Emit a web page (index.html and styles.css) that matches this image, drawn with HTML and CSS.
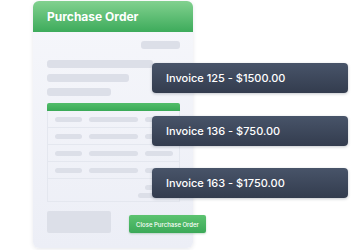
FILE: index.html
```html
<!DOCTYPE html>
<html lang="en">
<head>
    <meta charset="UTF-8">
    <title>Purchase Order</title>
    <link rel="stylesheet" href="styles.css">
</head>
<body>
    <div class="card">
        <header class="card-header">Purchase Order</header>
        <div class="card-body">
            <div class="bar bar-top"></div>
            <div class="lines">
                <div class="bar w106"></div>
                <div class="bar w82"></div>
                <div class="bar w64"></div>
            </div>
            <div class="green-bar"></div>
            <div class="table">
                <div class="row"><span class="cell c1"></span><span class="cell c2"></span><span class="cell c3"></span></div>
                <div class="row"><span class="cell c1"></span><span class="cell c2"></span><span class="cell c3"></span></div>
                <div class="row"><span class="cell c1"></span><span class="cell c2"></span><span class="cell c3"></span></div>
                <div class="row"><span class="cell c1"></span><span class="cell c2"></span><span class="cell c3"></span></div>
                <div class="totals">
                    <span class="cell t1"></span>
                    <span class="cell t2"></span>
                </div>
            </div>
            <div class="actions">
                <div class="placeholder"></div>
                <button class="button">Close Purchase Order</button>
            </div>
        </div>
    </div>

    <div class="invoice inv1">Invoice 125 - $1500.00</div>
    <div class="invoice inv2">Invoice 136 - $750.00</div>
    <div class="invoice inv3">Invoice 163 - $1750.00</div>
</body>
</html>
```

FILE: styles.css
```css
body {
    margin: 0;
    background: #fff;
    font-family: Inter, "Noto Sans", sans-serif;
    position: relative;
    width: 358px;
    height: 250px;
    overflow: hidden;
}
.card {
    width: 160px;
    height: 247px;
    margin: 1px 0 0 33px;
    border-radius: 6px;
    background: linear-gradient(#f6f7fb, #eceef6);
    box-shadow: 0 1px 4px rgba(40, 50, 80, 0.12);
    display: flex;
    flex-direction: column;
}
.card-header {
    height: 31px;
    box-sizing: border-box;
    padding: 0 14px;
    display: flex;
    align-items: center;
    color: #fff;
    font-weight: 700;
    font-size: 12px;
    border-radius: 6px 6px 0 0;
    background: linear-gradient(#82d18f, #3dab5b);
}
.card-body {
    padding: 9px 13px 0 14px;
    display: flex;
    flex-direction: column;
}
.bar {
    height: 8px;
    border-radius: 3px;
    background: #dcdfe8;
}
.bar-top {
    width: 39px;
    align-self: flex-end;
}
.lines {
    margin-top: 11px;
    display: flex;
    flex-direction: column;
    gap: 6px;
}
.w106 { width: 106px; }
.w82 { width: 82px; }
.w64 { width: 64px; }
.green-bar {
    margin-top: 7px;
    height: 8px;
    border-radius: 2px 2px 0 0;
    background: linear-gradient(#52bd6a, #3aa957);
}
.table {
    border: 1px solid #e4e7ef;
    border-top: none;
    height: 91px;
    box-sizing: border-box;
    display: flex;
    flex-direction: column;
}
.row {
    height: 17px;
    box-sizing: border-box;
    border-bottom: 1px solid #e4e7ef;
    display: flex;
    align-items: center;
    padding-left: 7px;
    gap: 7px;
}
.cell {
    height: 5px;
    border-radius: 3px;
    background: #dcdfe8;
    display: block;
}
.c1 { width: 27px; }
.c2 { width: 49px; }
.c3 { width: 28px; }
.totals {
    display: flex;
    flex-direction: column;
    align-items: flex-end;
    padding: 6px 6px 0 0;
    gap: 3px;
}
.t1 { width: 28px; }
.t2 { width: 35px; }
.actions {
    margin-top: 9px;
    display: flex;
    align-items: flex-end;
    gap: 18px;
}
.placeholder {
    flex: none;
    width: 64px;
    height: 22px;
    border-radius: 2px;
    background: #dcdfe8;
}
.button {
    flex: none;
    width: 77px;
    height: 18px;
    padding: 0;
    border: none;
    border-radius: 2px;
    color: #fff;
    font-family: Inter, sans-serif;
    font-size: 6px;
    font-weight: 500;
    background: linear-gradient(#5cc370, #3ba958);
    box-shadow: 0 1px 2px rgba(40, 120, 60, 0.25);
}
.invoice {
    position: absolute;
    left: 152px;
    width: 196px;
    height: 30px;
    box-sizing: border-box;
    padding-left: 14px;
    display: flex;
    align-items: center;
    color: #fff;
    font-size: 11px;
    font-weight: 500;
    border-radius: 4px;
    background: linear-gradient(#485469, #333c4e);
    box-shadow: 0 1px 3px rgba(20, 30, 50, 0.25);
}
.inv1 { top: 63px; }
.inv2 { top: 116px; }
.inv3 { top: 168px; }
```
